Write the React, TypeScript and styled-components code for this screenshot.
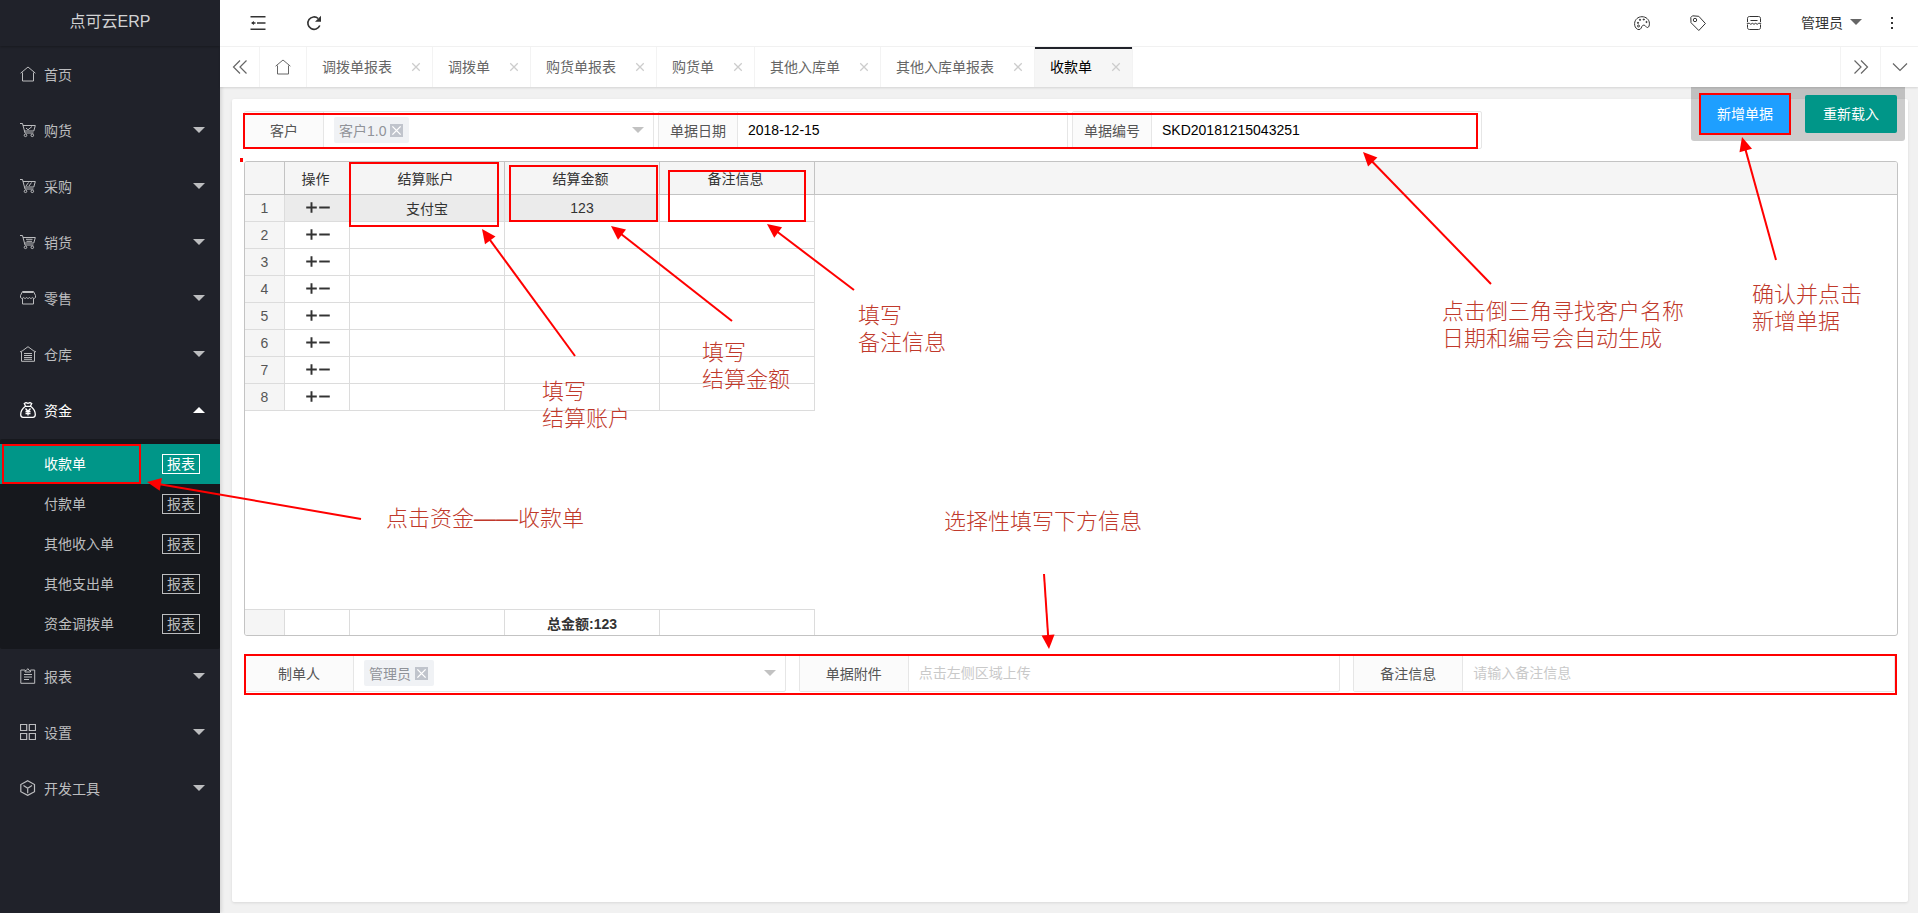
import React from 'react';
import styled, { createGlobalStyle, css } from 'styled-components';

const GlobalStyle = createGlobalStyle`
  *, *::before, *::after { box-sizing: border-box; }
  body { margin: 0; background: #f1f1f1; }
  body, button, input, select {
    font-family: "Liberation Sans", "Noto Sans CJK SC", sans-serif;
    font-size: 14px;
  }
  button, input, select { margin: 0; padding: 0; border: 0; background: none; color: inherit; outline: none; }
  button, select { cursor: pointer; }
  a { color: inherit; text-decoration: none; }
`;

/* ---------- icons ---------- */

const Svg = styled.svg.attrs({ viewBox: '0 0 16 16', 'aria-hidden': true })<{ $size?: number }>`
  width: ${(p) => p.$size ?? 16}px;
  height: ${(p) => p.$size ?? 16}px;
  flex: none;
  display: block;
  fill: none;
  stroke: currentColor;
`;

const HomeIcon = () => (
  <Svg><path d="M.6 7.2 8 1l7.400 6.200M2.500 6.500v8.500h11V6.500" /></Svg>
);

const CartIcon = ({ mark }: { mark: string }) => (
  <Svg>
    <path d="M0 1.500h2.500L5 11h8.500M3 3.500h12.300L13.800 9H4.500" />
    <circle cx="5.500" cy="13.300" r="1.300" />
    <circle cx="12.300" cy="13.300" r="1.300" />
    <path d={mark} />
  </Svg>
);

const StoreIcon = () => (
  <Svg>
    <path d="M2.500 2.500h11M2.500 1.500h11l2 4v2c-1 1.200-2.300 1.200-3.200 0-.9 1.200-2 1.200-2.900 0-.8 1.200-2 1.200-2.800 0-.9 1.200-2 1.200-2.900 0-.9 1.200-2.200 1.200-3.200 0v-2zM2.500 8.500v5.500h11V8.500" />
  </Svg>
);

const WarehouseIcon = () => (
  <Svg><path d="M1.500 15.300V5.500L8 .7l6.500 4.800v9.800zM0 6l1.500-1M16 6l-1.500-1M4 7.500h8M4 9.500h8M4 11.500h8M4 13.300h8" /></Svg>
);

const MoneyIcon = () => (
  <Svg>
    <path d="M5.500 4 4.300 1.500 6 .6l2 .8 2-.8 1.700.9L10.500 4M5 4.300h6M5 4.500C2.500 6.500.7 9.500.7 12.500c0 1.800.8 2.800 2.300 2.800h10c1.500 0 2.300-1 2.300-2.800 0-3-1.800-6-4.300-8" strokeWidth="1.300" />
    <path d="M5.500 6.500 8 9.300l2.500-2.800M8 9.300v4.200M5.500 9.500h5M5.500 11.500h5" strokeWidth="1.300" />
  </Svg>
);

const ClipboardIcon = () => (
  <Svg><path d="M5 2H.8v13.300h13.900V2h-4.200M5 4V2.500h1.300L7.800.6l1.500 1.900h1.200V4zM4 6.500h8M4 9h8M4 11.500h5" /></Svg>
);

const GridIcon = () => (
  <Svg><path d="M.5.5h6.200v6H.5zM9.300.5h6.200v6H9.300zM.5 9.500h6.200v6H.5zM9.300 9.500h6.200v6H9.300z" strokeWidth="1.200" /></Svg>
);

const CubeIcon = () => (
  <Svg><path d="m7.700.8 6.800 3.700v7.200l-6.800 3.700-6.900-3.700V4.500zM3.500 5.500l4.200 2.700L12 5.500M7.700 8.200v5" strokeWidth="1.200" /></Svg>
);

const FoldIcon = () => (
  <Svg><path d="M.5 1.700h15M7 8h8.500M.5 14.300h15" strokeWidth="1.500" /><path d="M5.500 8H2" strokeWidth="1.500" /><path d="M4 6v4L1 8z" fill="currentColor" stroke="none" /></Svg>
);

const RefreshIcon = () => (
  <Svg>
    <path d="M13.800 10.500A6.200 6.200 0 1 1 12.200 3.500" strokeWidth="1.600" />
    <path d="M15 .8v6H9z" fill="currentColor" stroke="none" />
  </Svg>
);

const PaletteIcon = () => (
  <Svg>
    <path d="M3.500 14.300C1.500 13.200.5 11 .6 8.500.8 4.500 4 1.700 8 1.700s7.200 2.800 7.400 6.500c.1 2.300-.5 4.100-1.800 4.300-1.600.2-1.800-2-3.400-2.300-1.400-.2-2.200.7-2.500 1.700-.5 1.700-2 3.500-4.200 2.400z" />
    <circle cx="4" cy="7.800" r=".6" fill="currentColor" />
    <circle cx="6" cy="4.800" r=".6" fill="currentColor" />
    <circle cx="9.800" cy="4.500" r=".6" fill="currentColor" />
    <circle cx="12.500" cy="7" r=".6" fill="currentColor" />
    <circle cx="4.500" cy="11" r="1" />
  </Svg>
);

const TagIcon = () => (
  <Svg><path d="M.8 2.500 2.500.8l6.300.5 6.600 7.200-6.600 7L1 7.700z" strokeLinejoin="round" /><circle cx="5" cy="5" r="1.700" /></Svg>
);

const NoteIcon = () => (
  <Svg>
    <path d="M1.500 7V3.500c0-1.300.8-2 2-2h9c1.200 0 2 .7 2 2V7M1.500 9.500v3c0 1.300.8 2 2 2h9c1.200 0 2-.7 2-2v-3M4.500 5.500h7M.8 8.300h2.500l1.500 1 1.600-1 1.600 1 1.600-1 1.600 1 1.500-1h2.500" />
  </Svg>
);

const DotsIcon = () => (
  <Svg><path d="M7 2h2v2H7zM7 7h2v2H7zM7 12h2v2H7z" fill="currentColor" stroke="none" /></Svg>
);

const DoubleLeft = () => <Svg><path d="M8 1.500 1.500 8 8 14.500M14.500 1.500 8 8l6.500 6.500" strokeWidth="1.200" /></Svg>;
const DoubleRight = () => <Svg><path d="M8 1.500 14.500 8 8 14.500M1.500 1.500 8 8l-6.500 6.500" strokeWidth="1.200" /></Svg>;
const DownIcon = () => <Svg><path d="m1 4.500 7 7 7-7" strokeWidth="1.200" /></Svg>;
const CloseIcon = ({ size = 10 }: { size?: number }) => <Svg $size={size}><path d="m2 2 12 12M14 2 2 14" strokeWidth="2" /></Svg>;
const PlusIcon = () => <Svg $size={13}><path d="M8 1.500v13M1.500 8h13" strokeWidth="2.400" /></Svg>;
const MinusIcon = () => <Svg $size={13}><path d="M1.500 8h13" strokeWidth="2.400" /></Svg>;

const Caret = styled.span<{ $up?: boolean; $color?: string }>`
  flex: none;
  width: 0;
  height: 0;
  border: 6px solid transparent;
  ${(p) => p.$up
    ? css`border-top: 0; border-bottom-color: ${p.$color ?? 'currentColor'};`
    : css`border-bottom: 0; border-top-color: ${p.$color ?? 'currentColor'};`}
  pointer-events: none;
`;

/* ---------- shell ---------- */

const Shell = styled.div`
  position: relative;
  display: flex;
  min-height: 100vh;
`;

const Sidebar = styled.aside`
  flex: none;
  width: 220px;
  background: #20222a;
  color: #bcbdbf;
  box-shadow: 1px 0 4px rgba(0, 0, 0, 0.15);
`;

const Logo = styled.h1`
  margin: 0 0 1px;
  height: 46px;
  padding-bottom: 6px;
  display: flex;
  align-items: center;
  justify-content: center;
  font-size: 16px;
  font-weight: 400;
  color: #d2d3d4;
  box-shadow: 0 1px 2px rgba(0, 0, 0, 0.25);
`;

const NavList = styled.ul`
  list-style: none;
  margin: 0;
  padding: 0;
`;

const NavButton = styled.button<{ $active?: boolean }>`
  display: flex;
  align-items: center;
  width: 100%;
  height: 56px;
  padding: 0 15px 2px 20px;
  gap: 8px;
  color: ${(p) => (p.$active ? '#fff' : 'inherit')};
  text-align: left;
`;

const NavText = styled.span`
  flex: 1;
`;

const TextLink = styled.a`
  padding-bottom: 2px;
`;

const SubList = styled.ul`
  list-style: none;
  margin: 0;
  padding: 5px 0;
  background: #16181d;
  border-radius: 2px;
`;

const SubItem = styled.li<{ $active?: boolean }>`
  display: flex;
  align-items: center;
  justify-content: space-between;
  height: 40px;
  padding: 0 20px 0 44px;
  ${(p) => p.$active && css`background: #009688; color: #fff;`}
`;

const ReportLink = styled.a`
  height: 20px;
  padding: 0 4px;
  border: 1px solid currentColor;
  line-height: 18px;
`;

const Main = styled.div`
  flex: 1;
  min-width: 0;
  display: flex;
  flex-direction: column;
`;

const Header = styled.header`
  display: flex;
  justify-content: space-between;
  height: 47px;
  padding: 0 18px 0 30px;
  background: #fff;
  border-bottom: 1px solid #f3f3f3;
  color: #333;
`;

const HeaderGroup = styled.div<{ $gap: number }>`
  display: flex;
  align-items: center;
  gap: ${(p) => p.$gap}px;
`;

const IconButton = styled.button`
  display: flex;
  align-items: center;
  justify-content: center;
`;

const UserMenu = styled.button`
  display: flex;
  align-items: center;
  gap: 7px;
  margin: 0 -18px 0 -1px;
  padding-bottom: 2px;
`;

const TabBar = styled.nav`
  display: flex;
  height: 40px;
  background: #fff;
  color: #666;
  box-shadow: 0 1px 2px rgba(0, 0, 0, 0.12);
`;

const TabControl = styled.button<{ $width: number; $side: 'left' | 'right' }>`
  flex: none;
  display: flex;
  align-items: center;
  justify-content: center;
  width: ${(p) => p.$width}px;
  border-${(p) => (p.$side === 'left' ? 'right' : 'left')}: 1px solid #f3f3f3;
`;

const Tabs = styled.div`
  flex: 1;
  display: flex;
`;

const Tab = styled.div<{ $active?: boolean }>`
  display: flex;
  align-items: center;
  gap: 19px;
  padding: 0 11px 0 15px;
  border-right: 1px solid #f3f3f3;
  ${(p) => p.$active && css`
    background: #f6f6f6;
    color: #000;
    box-shadow: inset 0 2px #20222a;
  `}
`;

const TabClose = styled(IconButton)`
  color: #ccc;
`;

const Content = styled.main`
  position: relative;
  flex: 1;
  display: flex;
  padding: 12px 10px 11px 12px;
`;

const Card = styled.section`
  flex: 1;
  min-width: 0;
  padding: 12px 10px 12px 12px;
  background: #fff;
  border-radius: 2px;
  box-shadow: 0 1px 3px rgba(0, 0, 0, 0.1);
`;

const FloatBar = styled.div`
  position: absolute;
  top: 0;
  right: 13px;
  display: flex;
  gap: 14px;
  padding: 8px;
  background: rgba(0, 0, 0, 0.2);
  border-radius: 0 0 3px 3px;
`;

const ActionButton = styled.button<{ $color: string }>`
  height: 38px;
  padding: 0 18px 2px;
  border-radius: 2px;
  background: ${(p) => p.$color};
  color: #fff;
`;

/* ---------- form ---------- */

const TopForm = styled.div`
  display: flex;
  gap: 4px;
  margin-bottom: 12px;
`;

const BottomForm = styled.div`
  display: grid;
  grid-template-columns: repeat(3, 1fr);
  gap: 13px;
  margin-top: 18px;
  padding-right: 3px;
`;

const FieldBox = styled.div<{ $width?: number }>`
  display: flex;
  height: 38px;
  width: ${(p) => (p.$width ? `${p.$width}px` : 'auto')};
  border: 1px solid #e6e6e6;
  border-radius: 2px;
  background: #fff;
`;

const FieldLabel = styled.label<{ $width: number }>`
  flex: none;
  display: flex;
  align-items: center;
  justify-content: center;
  width: ${(p) => p.$width}px;
  border-right: 1px solid #e6e6e6;
  background: #fbfbfb;
  color: #555;
`;

const TextInput = styled.input`
  flex: 1;
  min-width: 0;
  padding: 0 10px;
  color: #000;
  &::placeholder { color: #c9c9c9; opacity: 1; }
`;

const Picker = styled.div`
  flex: 1;
  min-width: 0;
  display: flex;
  align-items: center;
  padding: 0 9px 0 10px;
`;

const Chip = styled.span`
  display: flex;
  align-items: center;
  gap: 4px;
  height: 26px;
  padding: 0 6px 0 5px;
  border-radius: 2px;
  background: #f0f2f5;
  color: #909399;
  white-space: nowrap;
`;

const ChipClose = styled(IconButton)`
  width: 13px;
  height: 13px;
  background: #c0c4cc;
  color: #fff;
`;

const PickerSelect = styled.select`
  flex: 1;
  min-width: 0;
  height: 100%;
  appearance: none;
`;

type FieldProps = {
  id: string;
  label: string;
  labelWidth: number;
  width?: number;
  chip?: string;
  value?: string;
  placeholder?: string;
};

const Field = ({ id, label, labelWidth, width, chip, value, placeholder }: FieldProps) => (
  <FieldBox $width={width}>
    <FieldLabel htmlFor={id} $width={labelWidth}>{label}</FieldLabel>
    {chip ? (
      <Picker>
        <Chip>
          {chip}
          <ChipClose type="button" aria-label="移除"><CloseIcon size={11} /></ChipClose>
        </Chip>
        <PickerSelect id={id}><option value="" /></PickerSelect>
        <Caret $color="#c2c2c2" />
      </Picker>
    ) : (
      <TextInput id={id} type="text" defaultValue={value} placeholder={placeholder} />
    )}
  </FieldBox>
);

/* ---------- detail grid ---------- */

const GridFrame = styled.div`
  border: 1px solid #c3c3c3;
  border-radius: 3px;
  overflow: hidden;
`;

const GridTable = styled.table`
  width: 100%;
  table-layout: fixed;
  border-collapse: separate;
  border-spacing: 0;
  color: #333;
  text-align: center;
`;

const Col = styled.col<{ $width?: number }>`
  width: ${(p) => (p.$width ? `${p.$width}px` : 'auto')};
`;

const HeadCell = styled.th<{ $filler?: boolean }>`
  height: 33px;
  padding: 0 3px 0 0;
  background: #f5f5f5;
  border-bottom: 1px solid #c3c3c3;
  border-right: ${(p) => (p.$filler ? '0' : '1px solid #c3c3c3')};
  font-weight: 400;
`;

const Cell = styled.td<{ $tone?: 'index' | 'hover' }>`
  height: 27px;
  padding: 0;
  border-right: 1px solid #dcdcdc;
  border-bottom: 1px solid #dcdcdc;
  background: ${(p) => (p.$tone === 'index' ? '#f5f5f5' : p.$tone === 'hover' ? '#ebebeb' : '#fff')};
  color: ${(p) => (p.$tone === 'index' ? '#555' : '#333')};
`;

const RowTools = styled.div`
  display: flex;
  justify-content: center;
  padding: 0 0 2px 1px;
`;

const SpacerCell = styled.td`
  height: 198px;
  padding: 0;
`;

const FootCell = styled.td<{ $tone?: 'index' }>`
  height: 26px;
  padding: 0;
  border-right: 1px solid #dcdcdc;
  border-top: 1px solid #dcdcdc;
  background: ${(p) => (p.$tone === 'index' ? '#f5f5f5' : '#fff')};
  font-weight: 700;
`;

/* ---------- guide layer ---------- */

const Guide = styled.div`
  position: absolute;
  inset: 0;
  overflow: hidden;
  pointer-events: none;
`;

const GuideSvg = styled.svg`
  position: absolute;
  top: 0;
  left: 0;
  width: 100%;
  height: 100%;
  fill: none;
  stroke: #f00;
  stroke-width: 2;
`;

const Note = styled.p<{ $x: number; $y: number }>`
  position: absolute;
  left: ${(p) => p.$x}px;
  top: ${(p) => p.$y}px;
  margin: 0;
  font-size: 22px;
  font-weight: 300;
  line-height: 27px;
  color: #c0392b;
  white-space: pre;
`;

const boxes = [
  [243, 113, 1235, 36],
  [349, 162, 150, 65],
  [509, 165, 149, 57],
  [668, 170, 138, 52],
  [2, 444, 139, 40],
  [244, 654, 1653, 41],
  [1699, 93, 92, 42],
];

/* tail x, tail y, tip x, tip y */
const arrows = [
  [575, 356, 482, 229],
  [732, 321, 611, 226],
  [854, 290, 767, 224],
  [1491, 284, 1363, 152],
  [1776, 260, 1742, 137],
  [361, 519, 147, 482],
  [1044, 574, 1049, 649],
];

const Arrow = ({ points: [x1, y1, x2, y2] }: { points: number[] }) => {
  const angle = (Math.atan2(y2 - y1, x2 - x1) * 180) / Math.PI;
  const length = Math.hypot(x2 - x1, y2 - y1);
  return (
    <g transform={`translate(${x2} ${y2}) rotate(${angle})`}>
      <path d={`M${-length} 0H-10`} />
      <path d="M0 0-14-6.500v13z" fill="#f00" stroke="none" />
    </g>
  );
};

const notes = [
  { x: 542, y: 378, text: '填写\n结算账户' },
  { x: 702, y: 339, text: '填写\n结算金额' },
  { x: 858, y: 302, text: '填写\n备注信息' },
  { x: 1442, y: 298, text: '点击倒三角寻找客户名称\n日期和编号会自动生成' },
  { x: 1752, y: 281, text: '确认并点击\n新增单据' },
  { x: 386, y: 505, text: '点击资金——收款单' },
  { x: 944, y: 508, text: '选择性填写下方信息' },
];

/* ---------- data ---------- */

const navBefore = [
  { text: '购货', icon: <CartIcon mark="m6 6 2 1.800L12 4.500" /> },
  { text: '采购', icon: <CartIcon mark="m6 8 2.500-3.500M9 8l2.500-3.500" /> },
  { text: '销货', icon: <CartIcon mark="M6 5.300h6.500M6.500 7.300h5.500" /> },
  { text: '零售', icon: <StoreIcon /> },
  { text: '仓库', icon: <WarehouseIcon /> },
];

const navAfter = [
  { text: '报表', icon: <ClipboardIcon /> },
  { text: '设置', icon: <GridIcon /> },
  { text: '开发工具', icon: <CubeIcon /> },
];

const subItems = ['收款单', '付款单', '其他收入单', '其他支出单', '资金调拨单'];
const tabs = ['调拨单报表', '调拨单', '购货单报表', '购货单', '其他入库单', '其他入库单报表', '收款单'];
const rows = [1, 2, 3, 4, 5, 6, 7, 8];

type NavProps = { text: string; icon: React.ReactNode };

const NavItem = ({ text, icon }: NavProps) => (
  <li>
    <NavButton type="button">{icon}<NavText>{text}</NavText><Caret /></NavButton>
  </li>
);

export default function App() {
  return (
    <Shell>
      <GlobalStyle />
      <Sidebar>
        <Logo>点可云ERP</Logo>
        <NavList>
          <li><NavButton type="button"><HomeIcon /><NavText>首页</NavText></NavButton></li>
          {navBefore.map((item) => <NavItem key={item.text} {...item} />)}
          <li>
            <NavButton type="button" $active aria-expanded="true">
              <MoneyIcon /><NavText>资金</NavText><Caret $up />
            </NavButton>
            <SubList>
              {subItems.map((text, i) => (
                <SubItem key={text} $active={i === 0}>
                  <TextLink href="#bill">{text}</TextLink>
                  <ReportLink href="#report">报表</ReportLink>
                </SubItem>
              ))}
            </SubList>
          </li>
          {navAfter.map((item) => <NavItem key={item.text} {...item} />)}
        </NavList>
      </Sidebar>

      <Main>
        <Header>
          <HeaderGroup $gap={40}>
            <IconButton type="button" aria-label="收起菜单"><FoldIcon /></IconButton>
            <IconButton type="button" aria-label="刷新"><RefreshIcon /></IconButton>
          </HeaderGroup>
          <HeaderGroup $gap={40}>
            <IconButton type="button" aria-label="主题"><PaletteIcon /></IconButton>
            <IconButton type="button" aria-label="标签"><TagIcon /></IconButton>
            <IconButton type="button" aria-label="便签"><NoteIcon /></IconButton>
            <UserMenu type="button">管理员<Caret $color="#666" /></UserMenu>
            <IconButton type="button" aria-label="更多"><DotsIcon /></IconButton>
          </HeaderGroup>
        </Header>
        <TabBar>
          <TabControl type="button" $side="left" $width={40} aria-label="向左"><DoubleLeft /></TabControl>
          <TabControl type="button" $side="left" $width={47} aria-label="首页"><HomeIcon /></TabControl>
          <Tabs>
            {tabs.map((text, i) => (
              <Tab key={text} $active={i === tabs.length - 1}>
                <TextLink href="#tab">{text}</TextLink>
                <TabClose type="button" aria-label="关闭"><CloseIcon /></TabClose>
              </Tab>
            ))}
          </Tabs>
          <TabControl type="button" $side="right" $width={40} aria-label="向右"><DoubleRight /></TabControl>
          <TabControl type="button" $side="right" $width={38} aria-label="更多标签"><DownIcon /></TabControl>
        </TabBar>

        <Content>
          <Card>
            <TopForm>
              <Field id="customer" label="客户" labelWidth={79} width={410} chip="客户1.0" />
              <Field id="date" label="单据日期" labelWidth={79} width={410} value="2018-12-15" />
              <Field id="number" label="单据编号" labelWidth={79} width={410} value="SKD20181215043251" />
            </TopForm>

            <GridFrame>
              <GridTable>
                <colgroup>
                  <Col $width={40} /><Col $width={65} /><Col $width={155} /><Col $width={155} /><Col $width={155} /><Col />
                </colgroup>
                <thead>
                  <tr>
                    <HeadCell />
                    <HeadCell>操作</HeadCell>
                    <HeadCell>结算账户</HeadCell>
                    <HeadCell>结算金额</HeadCell>
                    <HeadCell>备注信息</HeadCell>
                    <HeadCell $filler />
                  </tr>
                </thead>
                <tbody>
                  {rows.map((n) => {
                    const tone = n === 1 ? 'hover' : undefined;
                    return (
                      <tr key={n}>
                        <Cell $tone="index">{n}</Cell>
                        <Cell $tone={tone}>
                          <RowTools>
                            <IconButton type="button" aria-label="增加一行"><PlusIcon /></IconButton>
                            <IconButton type="button" aria-label="删除一行"><MinusIcon /></IconButton>
                          </RowTools>
                        </Cell>
                        <Cell $tone={tone}>{n === 1 && '支付宝'}</Cell>
                        <Cell $tone={tone}>{n === 1 && '123'}</Cell>
                        <Cell />
                      </tr>
                    );
                  })}
                  <tr><SpacerCell colSpan={6} /></tr>
                </tbody>
                <tfoot>
                  <tr>
                    <FootCell $tone="index" />
                    <FootCell />
                    <FootCell />
                    <FootCell>总金额:123</FootCell>
                    <FootCell />
                  </tr>
                </tfoot>
              </GridTable>
            </GridFrame>

            <BottomForm>
              <Field id="maker" label="制单人" labelWidth={109} chip="管理员" />
              <Field id="file" label="单据附件" labelWidth={109} placeholder="点击左侧区域上传" />
              <Field id="remark" label="备注信息" labelWidth={109} placeholder="请输入备注信息" />
            </BottomForm>
          </Card>
          <FloatBar>
            <ActionButton type="button" $color="#1e9fff">新增单据</ActionButton>
            <ActionButton type="button" $color="#009688">重新载入</ActionButton>
          </FloatBar>
        </Content>
      </Main>

      <Guide>
        <GuideSvg>
          {boxes.map(([x, y, w, h]) => (
            <rect key={`${x}-${y}`} x={x + 1} y={y + 1} width={w - 2} height={h - 2} />
          ))}
          <rect x="240" y="158" width="3" height="4" fill="#f00" stroke="none" />
          {arrows.map((points) => <Arrow key={points.join()} points={points} />)}
        </GuideSvg>
        {notes.map((n) => <Note key={n.text} $x={n.x} $y={n.y}>{n.text}</Note>)}
      </Guide>
    </Shell>
  );
}
